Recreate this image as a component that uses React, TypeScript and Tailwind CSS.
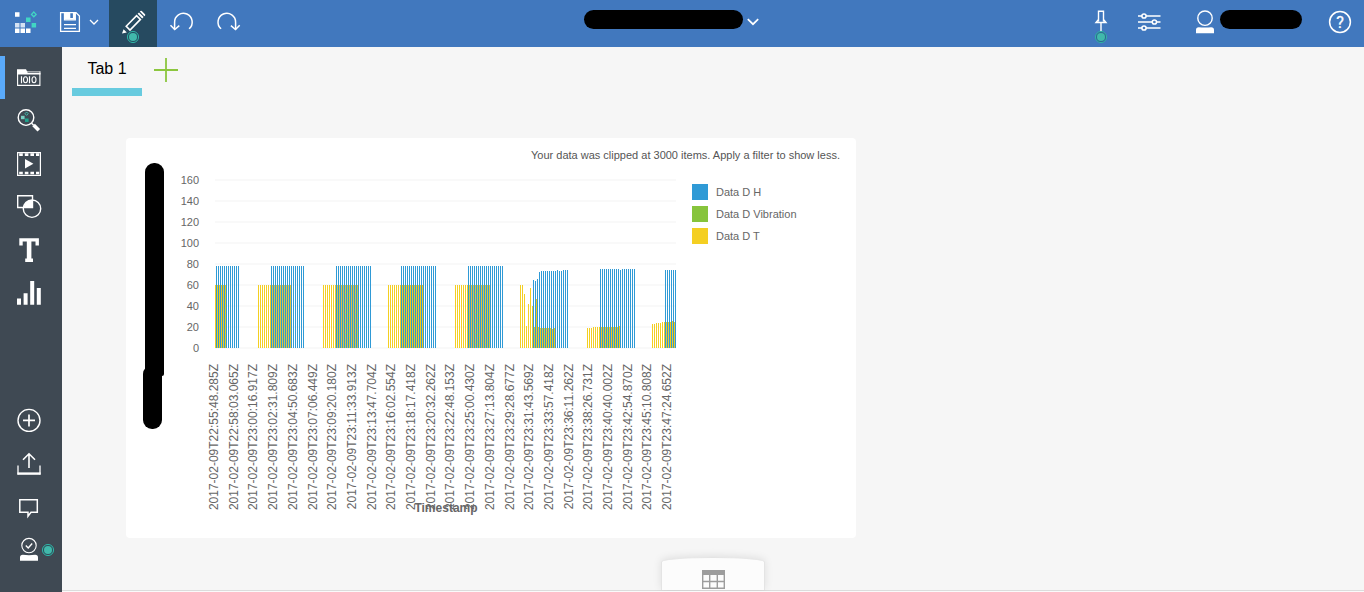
import React from "react";

const repeat = (value: number, count: number): number[] => Array.from({ length: count }, () => value);

type Burst = {
  yellowX: number;
  yellow: number[];
  blueX: number;
  blue: number[];
  overlap: string;
};

const GOLD = "#f4cb1c";
const MUTED = "#dfc642";

const bursts: Burst[] = [
  { yellowX: 0, yellow: repeat(60, 6), blueX: 1, blue: repeat(78, 12), overlap: GOLD },
  { yellowX: 43, yellow: repeat(60, 17), blueX: 56, blue: repeat(78, 17), overlap: MUTED },
  { yellowX: 108, yellow: repeat(60, 18), blueX: 121, blue: repeat(78, 18), overlap: MUTED },
  { yellowX: 173, yellow: repeat(60, 18), blueX: 186, blue: repeat(78, 18), overlap: GOLD },
  { yellowX: 240, yellow: repeat(60, 18), blueX: 253, blue: repeat(78, 18), overlap: MUTED },
  {
    yellowX: 305,
    yellow: [60, 60, 51, 21, 42, 57, 40, 20, 47, 20, ...repeat(19, 6), 18, 19],
    blueX: 318,
    blue: [65, 64, 66, 72, ...repeat(73, 8), 74, 73, 73, 74, 74, 74],
    overlap: GOLD,
  },
  {
    yellowX: 372,
    yellow: [19, 19, 19, ...repeat(20, 13), 21],
    blueX: 385,
    blue: [...repeat(75, 10), 74, ...repeat(75, 7)],
    overlap: GOLD,
  },
  {
    yellowX: 437,
    yellow: [23, 23, 24, 24, 24, 25, 25, 25, 25, 25, 26, 25],
    blueX: 450,
    blue: repeat(74, 6),
    overlap: GOLD,
  },
];

const timestamps = [
  "2017-02-09T22:55:48.285Z",
  "2017-02-09T22:58:03.065Z",
  "2017-02-09T23:00:16.917Z",
  "2017-02-09T23:02:31.809Z",
  "2017-02-09T23:04:50.683Z",
  "2017-02-09T23:07:06.449Z",
  "2017-02-09T23:09:20.180Z",
  "2017-02-09T23:11:33.913Z",
  "2017-02-09T23:13:47.704Z",
  "2017-02-09T23:16:02.554Z",
  "2017-02-09T23:18:17.418Z",
  "2017-02-09T23:20:32.262Z",
  "2017-02-09T23:22:48.153Z",
  "2017-02-09T23:25:00.430Z",
  "2017-02-09T23:27:13.804Z",
  "2017-02-09T23:29:28.677Z",
  "2017-02-09T23:31:43.569Z",
  "2017-02-09T23:33:57.418Z",
  "2017-02-09T23:36:11.262Z",
  "2017-02-09T23:38:26.731Z",
  "2017-02-09T23:40:40.002Z",
  "2017-02-09T23:42:54.870Z",
  "2017-02-09T23:45:10.808Z",
  "2017-02-09T23:47:24.652Z",
];

const legend = [
  { label: "Data D H", swatch: "bg-[#2f9ad6]" },
  { label: "Data D Vibration", swatch: "bg-[#87c43c]" },
  { label: "Data D T", swatch: "bg-[#f4cf22]" },
];

const LEFT = 89;
const BASE = 186;
const PX_PER_UNIT = 1.05;
const barHeight = (v: number) => Math.round(v * PX_PER_UNIT);

function Chart() {
  return (
    <svg
      width="566"
      height="374"
      viewBox="0 2 566 374"
      className="shrink-0 overflow-visible"
      role="img"
      aria-label="Sensor readings by timestamp"
    >
      {[0, 20, 40, 60, 80, 100, 120, 140, 160].map((v) => {
        const y = BASE - v * PX_PER_UNIT;
        return (
          <g key={v}>
            <rect x={LEFT} y={y - 1} width="461" height="2" fill="#f9f9f9" />
            <text x="73" y={y + 4} textAnchor="end" fontSize="11" fill="#666">
              {v}
            </text>
          </g>
        );
      })}
      <g shapeRendering="crispEdges">
        {bursts.map((b) => (
          <g key={b.yellowX}>
            {b.yellow.map((v, i) => {
              const x = b.yellowX + i * 2;
              return (
                <rect
                  key={i}
                  x={LEFT + x}
                  y={BASE - barHeight(v)}
                  width="1"
                  height={barHeight(v)}
                  fill={x > b.blueX ? b.overlap : "#f4cf22"}
                />
              );
            })}
            {b.blue.map((v, i) => (
              <rect
                key={i}
                x={LEFT + b.blueX + i * 2}
                y={BASE - barHeight(v)}
                width="1"
                height={barHeight(v)}
                fill="#2f9ad6"
              />
            ))}
          </g>
        ))}
      </g>
      {timestamps.map((t, i) => (
        <text
          key={t}
          transform={`translate(${Math.round(92 + i * 19.7)} 202) rotate(-90)`}
          textAnchor="end"
          fontSize="12"
          fill="#666"
        >
          {t}
        </text>
      ))}
      <text x="320" y="350" textAnchor="middle" fontSize="12" fontWeight="bold" fill="#666">
        Timestamp
      </text>
      <rect x="19" y="1" width="19" height="213" rx="9" fill="#000" />
      <rect x="17" y="203" width="19" height="64" rx="9" fill="#000" />
      <rect x="19" y="194" width="19" height="20" rx="2" fill="#000" />
    </svg>
  );
}

function Badge({ cx, cy }: { cx: number; cy: number }) {
  return (
    <g>
      <circle cx={cx} cy={cy} r="5.6" fill="#225a66" fillOpacity="0.5" stroke="#2fb3a5" strokeWidth="1" />
      <circle cx={cx} cy={cy} r="4" fill="#41b9ab" stroke="none" />
    </g>
  );
}

function HeaderButton({ label, wide, active, children }: { label: string; wide?: string; active?: boolean; children: React.ReactNode }) {
  return (
    <button type="button" aria-label={label} className={`h-full ${wide ?? "w-12"} ${active ? "bg-[#264a60]" : ""}`}>
      {children}
    </button>
  );
}

function SideButton({ label, active, children }: { label: string; active?: boolean; children: React.ReactNode }) {
  return (
    <button
      type="button"
      aria-label={label}
      className={`block h-[43px] w-full ${active ? "bg-linear-to-r from-[#5aaafa] from-[5px] to-transparent to-[5px]" : ""}`}
    >
      <svg width="62" height="43" viewBox="0 0 62 43" fill="none" stroke="#fff" strokeWidth="1.4">
        {children}
      </svg>
    </button>
  );
}

function Header() {
  return (
    <header className="flex h-[47px] w-full shrink-0 items-center bg-[#4178be]">
      <HeaderButton label="Home" wide="w-[50px]">
        <svg width="50" height="47" viewBox="0 0 50 47">
          <path fill="#fff" d="M15 12.3h4.5v4.5H15zM15 28.5h4.5V33H15zM20.5 28.5H25V33h-4.5zM26 28.5h4.5V33H26z" />
          <path fill="#d5e2f3" d="M15 23h4.5v4.5H15zM20.5 23H25v4.5h-4.5z" />
          <path fill="#41d6c3" d="M26 17.6h4.5v4.5H26zM31.6 23h4.5v4.5h-4.5z" />
          <path fill="none" stroke="#41d6c3" strokeWidth="1.3" d="M33.8 12l2.3 2.4-2.3 2.4-2.3-2.4z" />
        </svg>
      </HeaderButton>
      <HeaderButton label="Save" wide="w-[35px]">
        <svg width="35" height="47" viewBox="0 0 35 47" fill="none" stroke="#fff" strokeWidth="1.3">
          <path d="M10.6 12.6h15.4l3.4 3.4v15.4H10.6z" />
          <path d="M14.5 12.6v7.2h10.8v-7.2" />
          <path fill="#fff" stroke="none" d="M15 13h5.3v5h2.6v-5H25v6.5H15z" />
          <path d="M14 24.6h12M14 28.4h12" />
        </svg>
      </HeaderButton>
      <HeaderButton label="Save options" wide="w-6">
        <svg width="24" height="47" viewBox="0 0 24 47" fill="none" stroke="#fff" strokeWidth="1.3">
          <path d="M5 20l4 4 4-4" />
        </svg>
      </HeaderButton>
      <HeaderButton label="Edit" active>
        <svg width="48" height="47" viewBox="0 0 48 47" fill="none" stroke="#fff" strokeWidth="1.6">
          <path d="M17.2 26.2L27.6 15.6l3.8 3.8L21 30z" />
          <path fill="#fff" stroke="none" d="M14.6 29.2l3.2 3.2-4.8 1zM28.6 13.8l1.4-1.4 4.6 4.6-1.4 1.4zM30.8 11.6l.7-.7q.7-.4 1.3.1l3.2 3.2q.5.6.1 1.3l-.7.7z" />
          <Badge cx={24} cy={37} />
        </svg>
      </HeaderButton>
      <HeaderButton label="Undo">
        <svg width="48" height="47" viewBox="0 0 48 47" fill="none" stroke="#fff" strokeWidth="1.5">
          <path d="M17.6 29.5V22.5a8.8 8.8 0 1 1 14.5 6.3" />
          <path d="M13.5 25.2l4.2 4.3 4.6-3.9" />
        </svg>
      </HeaderButton>
      <HeaderButton label="Redo">
        <svg width="48" height="47" viewBox="0 0 48 47" fill="none" stroke="#fff" strokeWidth="1.5">
          <path d="M30.6 29.5V22.5a8.8 8.8 0 1 0-14.5 6.3" />
          <path d="M34.7 25.2l-4.2 4.3-4.6-3.9" />
        </svg>
      </HeaderButton>

      <div className="flex h-full flex-1 justify-center pt-[10px] pl-3">
        <button type="button" aria-label="Dashboard menu" className="flex h-[19px] items-center gap-1">
          <span className="h-full w-[159px] rounded-full bg-black" />
          <svg width="12" height="19" viewBox="0 0 12 19" fill="none" stroke="#fff" strokeWidth="1.7">
            <path d="M.8 9.2L6 14.2l5.2-5" />
          </svg>
        </button>
      </div>

      <HeaderButton label="Pin">
        <svg width="48" height="47" viewBox="0 0 48 47" fill="none" stroke="#fff" strokeWidth="1.4">
          <path d="M21.5 21.5V11.3h5v10.2M20.8 11.3h6.4M21.5 19.5l-2.5 3h10l-2.5-3M24 22.5V32" />
          <Badge cx={24} cy={37} />
        </svg>
      </HeaderButton>
      <HeaderButton label="Filters">
        <svg width="48" height="47" viewBox="0 0 48 47" fill="#4178be" stroke="#fff" strokeWidth="1.5">
          <path d="M13 16h22.5M13 22h22.5M13 28h22.5" />
          <circle cx="19" cy="16" r="2.1" />
          <circle cx="29.4" cy="22" r="2.1" />
          <circle cx="19" cy="28" r="2.1" />
        </svg>
      </HeaderButton>
      <button type="button" aria-label="Account" className="flex h-full gap-[5px] pr-[14px] pl-[22px]">
        <svg width="20" height="47" viewBox="0 0 20 47">
          <circle cx="10" cy="18.2" r="7.2" fill="none" stroke="#fff" strokeWidth="1.4" />
          <path fill="#fff" d="M1 33.2v-3.4q0-2.6 2.8-2.6 6.2.8 12.4 0 2.8 0 2.8 2.6v3.4z" />
        </svg>
        <span className="mt-[10px] h-[19px] w-[82px] rounded-full bg-black" />
      </button>
      <HeaderButton label="Help">
        <svg width="48" height="47" viewBox="0 0 48 47">
          <circle cx="24" cy="22" r="10.4" fill="none" stroke="#fff" strokeWidth="1.5" />
          <text x="24" y="28" textAnchor="middle" fontSize="16" fill="#fff" stroke="#fff" strokeWidth="0.3" className="font-['Roboto',sans-serif]">
            ?
          </text>
        </svg>
      </HeaderButton>
    </header>
  );
}

function Sidebar() {
  return (
    <nav className="flex w-[62px] shrink-0 flex-col bg-[#3f4953] pt-[9px] pb-[21px]">
      <SideButton label="Data sources" active>
        <path fill="#fff" stroke="none" d="M17 13.2h9l1 2h13.5v3.3H17z" />
        <path stroke="#3f4953" strokeWidth="1" d="M27.5 16.2h12" />
        <path strokeWidth="1.1" d="M17.6 18v11.4h22.3V17" />
        <path strokeWidth="1.2" d="M21.5 20.2v7M29.5 20.2v7" />
        <ellipse cx="25.5" cy="23.7" rx="2" ry="3" strokeWidth="1.1" />
        <ellipse cx="34" cy="23.7" rx="2" ry="3" strokeWidth="1.1" />
      </SideButton>
      <SideButton label="Discover">
        <circle cx="26" cy="18.6" r="7.8" />
        <path d="M31.6 24.2l2 2" />
        <path strokeWidth="3.6" d="M33.6 26.1l5.2 5.2" />
        <path fill="#79cfc3" stroke="none" d="M21 16.8h3.6v3.4H21z" />
        <path fill="#1fa68f" stroke="none" d="M25 19.5h3.6v3.4H25z" />
        <path stroke="#41b9ab" strokeWidth="1" d="M26.6 13l1.6 1.7-1.6 1.7-1.6-1.7z" />
      </SideButton>
      <SideButton label="Media">
        <path strokeWidth="1.2" d="M17.6 10.6h22.8v22.8H17.6z" />
        <path strokeWidth="2.6" strokeDasharray="3.6 2" d="M19.2 12.6h20M19.2 31h20" />
        <path fill="#fff" stroke="none" d="M25 17l8.4 4.7-8.4 4.7z" />
      </SideButton>
      <SideButton label="Shapes">
        <path d="M17.7 10.7h14.8v11.8H17.7z" />
        <circle cx="32" cy="23.7" r="8.7" />
        <path fill="#fff" stroke="none" d="M23.3 22.5A8.8 8.8 0 0 1 32.5 15v7.5z" />
      </SideButton>
      <SideButton label="Text">
        <path strokeWidth="3.4" d="M21 17.4v-5.5h16.2v5.5M25.2 32.2h7.8" />
        <path strokeWidth="4.6" d="M29.1 12v20" />
      </SideButton>
      <SideButton label="Charts">
        <path fill="#fff" stroke="none" d="M17 27.5h4v6.2h-4zM23.6 22.3h4v11.4h-4zM30.2 10h4v23.7h-4zM36.8 17h4v16.7h-4z" />
      </SideButton>

      <div className="mt-auto">
        <SideButton label="Add">
          <circle cx="29" cy="21.4" r="11" />
          <path strokeWidth="1.7" d="M29 15.4v12M23 21.4h12" />
        </SideButton>
        <SideButton label="Share">
          <path strokeWidth="1.6" d="M29 26V12M23 17.8l6-6 6 6" />
          <path strokeWidth="1.3" d="M18 23.5v9M40 23.5v9" />
          <path strokeWidth="2.4" d="M17.4 31.6h23.2" />
        </SideButton>
        <SideButton label="Comments">
          <path strokeWidth="1.5" d="M19.8 14.8h17.5v12.4h-6.3l-3 4v-4h-8.2z" />
        </SideButton>
        <SideButton label="Profile">
          <circle cx="29" cy="17.6" r="7.2" strokeWidth="1.1" />
          <path d="M25.8 17.6l2.4 2.3 4-4.4" />
          <path fill="#fff" stroke="none" d="M20 32.8v-3.2q0-2.8 2.8-2.8 6.2.8 12.4 0 2.8 0 2.8 2.8v3.2z" />
          <Badge cx={48} cy={22} />
        </SideButton>
      </div>
    </nav>
  );
}

export default function App() {
  return (
    <div className="flex min-h-screen flex-col bg-[#f6f6f6] font-['Liberation_Sans',Arial,sans-serif]">
      <Header />
      <div className="flex flex-1">
        <Sidebar />
        <main className="flex min-w-0 flex-1 flex-col">
          <div className="flex items-start gap-3 pl-[10px]">
            <button type="button" className="h-[49px] w-[70px] border-b-8 border-[#68cbdf] pt-0.5 text-base text-black">
              Tab 1
            </button>
            <button type="button" aria-label="Add tab" className="mt-[11px]">
              <svg width="24" height="24" viewBox="0 0 24 24" stroke="#8cc63f" strokeWidth="1.8">
                <path d="M0 12h24M12 0v24" />
              </svg>
            </button>
          </div>

          <section className="mt-[42px] ml-16 w-full max-w-[730px] rounded bg-white">
            <p className="pt-2 pr-4 text-right text-[11px] leading-[18px] text-[#555]">
              Your data was clipped at 3000 items. Apply a filter to show less.
            </p>
            <div className="flex">
              <Chart />
              <ul className="flex flex-col gap-[6px] pt-5">
                {legend.map((item) => (
                  <li key={item.label} className="flex items-center gap-2 text-[11px] leading-[16px] text-[#666]">
                    <span className={`size-4 ${item.swatch}`} />
                    {item.label}
                  </li>
                ))}
              </ul>
            </div>
          </section>

          <div className="mt-auto flex justify-center border-b border-[#dcdcdc]">
            <button
              type="button"
              aria-label="Show data"
              className="flex h-[33px] w-[104px] justify-center rounded-[50%_50%_0_0/5px_5px_0_0] border border-b-0 border-[#e4e4e4] bg-[#fcfcfc] pt-3 shadow-[0_-1px_8px_rgba(0,0,0,0.1)]"
            >
              <svg width="23" height="19" viewBox="0 0 23 19" fill="none" stroke="#9d9d9d" strokeWidth="1.4">
                <path fill="#9d9d9d" stroke="none" d="M0 0h23v5H0z" />
                <path d="M.7.7h21.6v17.6H.7zM0 11.5h23M7.7 4v14M15.3 4v14" />
              </svg>
            </button>
          </div>
          <div className="h-px bg-[#fafafa]" />
        </main>
      </div>
    </div>
  );
}
